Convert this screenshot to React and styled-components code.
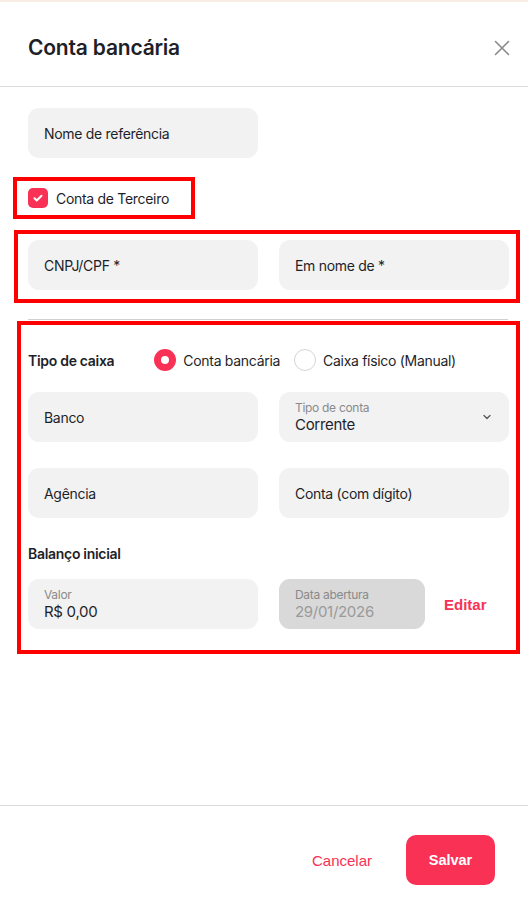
import React from 'react';
import styled, {createGlobalStyle} from 'styled-components';

const ACCENT = '#f93155';
const FIELD_BG = '#f2f2f2';
const TEXT = '#1e1f29';
const MARK = '#ff0000';

const GlobalStyle = createGlobalStyle`
    html, body {
        margin: 0;
        padding: 0;
        background: #fff;
    }
    body {
        font-family: Inter, "Noto Sans", sans-serif;
        color: ${TEXT};
    }
    * {
        box-sizing: border-box;
    }
`

const Modal = styled.div`
    width: 528px;
    height: 908px;
    display: flex;
    flex-direction: column;
    border-top: 2px solid #f8ece4;
    background: #fff;
`

const Header = styled.div`
    height: 85px;
    display: flex;
    align-items: center;
    justify-content: space-between;
    padding: 7px 17px 0 28px;
    border-bottom: 1px solid #dcdcdc;
`

const Title = styled.h1`
    margin: 0;
    font-size: 21px;
    font-weight: 600;
    letter-spacing: -0.2px;
    color: ${TEXT};
`

const CloseButton = styled.button`
    border: 0;
    background: none;
    padding: 0;
    width: 18px;
    height: 18px;
    display: flex;
    align-items: center;
    justify-content: center;
    cursor: pointer;
`

const Body = styled.div`
    flex: 1;
    padding: 21px 19px 0 28px;
    display: flex;
    flex-direction: column;
    font-size: 14px;
    letter-spacing: -0.3px;
`

/* the red marks drawn over the screenshot */
const Mark = styled.div`
    border: 4px solid ${MARK};
    margin: ${p => p.$margin};
    padding: ${p => p.$padding};
    align-self: ${p => p.$self || 'stretch'};
`

const Row = styled.div`
    display: grid;
    grid-template-columns: 230px 230px;
    column-gap: 21px;
    align-items: center;
`

const Field = styled.div`
    height: 50px;
    width: ${p => p.$width || 'auto'};
    border-radius: 11px;
    background: ${p => (p.$disabled ? '#d9d9d9' : FIELD_BG)};
    padding: 0 16px;
    display: flex;
    align-items: center;
    justify-content: space-between;
    color: ${TEXT};
`

const Stack = styled.div`
    display: flex;
    flex-direction: column;
    line-height: 1.15;
`

const Floating = styled.span`
    font-size: 12px;
    color: #8a8a8a;
    margin-bottom: 1px;
`

const Value = styled.span`
    font-size: 15px;
    color: ${p => (p.$muted ? '#9a9a9a' : TEXT)};
`

const CheckRow = styled.label`
    display: flex;
    align-items: center;
    gap: 8px;
`

const CheckBox = styled.span`
    width: 20px;
    height: 20px;
    border-radius: 5px;
    background: ${ACCENT};
    display: flex;
    align-items: center;
    justify-content: center;
`

const Divider = styled.hr`
    border: 0;
    border-top: 1px solid #d0d0d0;
    margin: 16px 1px 1px 0;
`

const SectionLabel = styled.span`
    font-weight: 600;
    color: ${TEXT};
`

const RadioRow = styled.div`
    display: flex;
    align-items: center;
`

const RadioOption = styled.label`
    display: flex;
    align-items: center;
    gap: 7px;
    margin-left: ${p => p.$offset || '0'};
`

const Radio = styled.span`
    width: 22px;
    height: 22px;
    border-radius: 50%;
    background: #fff;
    border: ${p => (p.$checked ? `7px solid ${ACCENT}` : '1px solid #d4d4d4')};
`

const Section = styled.div`
    display: flex;
    flex-direction: column;
    gap: ${p => p.$gap || '0'};
    margin-top: ${p => p.$top || '0'};
`

const DateRow = styled.div`
    display: flex;
    align-items: center;
`

const LinkButton = styled.button`
    border: 0;
    background: none;
    padding: 0;
    font-family: "Liberation Sans", Arial, sans-serif;
    font-size: 15px;
    font-weight: ${p => p.$weight || 400};
    margin-left: ${p => p.$offset || '0'};
    color: ${ACCENT};
    cursor: pointer;
`

const Footer = styled.div`
    height: 103px;
    border-top: 1px solid #dcdcdc;
    display: flex;
    align-items: flex-start;
    justify-content: flex-end;
    padding: 29px 33px 0 0;
    gap: 34px;
`

const FooterLink = styled(LinkButton)`
    height: 50px;
`

const PrimaryButton = styled.button`
    width: 89px;
    height: 50px;
    border: 0;
    border-radius: 10px;
    background: ${ACCENT};
    color: #fff;
    font-family: "Liberation Sans", Arial, sans-serif;
    font-size: 14.5px;
    font-weight: 700;
    cursor: pointer;
`

const Chevron = () => (
    <svg width="12" height="12" viewBox="0 0 24 24" fill="none" stroke="#555" strokeWidth="2.5" strokeLinecap="round" strokeLinejoin="round">
        <path d="M6 9l6 6 6-6" />
    </svg>
)

export default function App() {
    return (
        <>
            <GlobalStyle />
            <Modal>
                <Header>
                    <Title>Conta bancária</Title>
                    <CloseButton aria-label="Fechar">
                        <svg width="16" height="16" viewBox="0 0 16 16" stroke="#8a8a8a" strokeWidth="1.6" strokeLinecap="round">
                            <path d="M1.5 1.5l13 13M14.5 1.5l-13 13" />
                        </svg>
                    </CloseButton>
                </Header>

                <Body>
                    <Field $width="230px">Nome de referência</Field>

                    <Mark $self="flex-start" $margin="19px 0 0 -15px" $padding="7px 22px 7px 11px">
                        <CheckRow>
                            <CheckBox>
                                <svg width="12" height="12" viewBox="0 0 24 24" fill="none" stroke="#fff" strokeWidth="4" strokeLinecap="round" strokeLinejoin="round">
                                    <path d="M5 12.5l4.5 4.5L19 7.5" />
                                </svg>
                            </CheckBox>
                            Conta de Terceiro
                        </CheckRow>
                    </Mark>

                    <Mark $margin="11px -11px 0 -14px" $padding="6px 7px 9px 10px">
                        <Row>
                            <Field>CNPJ/CPF *</Field>
                            <Field>Em nome de *</Field>
                        </Row>
                    </Mark>

                    <Divider />

                    <Mark $margin="0 -11px 0 -11px" $padding="24px 7px 21px 7px">
                        <Section>
                            <RadioRow>
                                <SectionLabel>Tipo de caixa</SectionLabel>
                                <RadioOption $offset="40px">
                                    <Radio $checked />
                                    Conta bancária
                                </RadioOption>
                                <RadioOption $offset="14px">
                                    <Radio />
                                    Caixa físico (Manual)
                                </RadioOption>
                            </RadioRow>

                            <Section $gap="26px" $top="21px">
                                <Row>
                                    <Field>Banco</Field>
                                    <Field>
                                        <Stack>
                                            <Floating>Tipo de conta</Floating>
                                            <Value>Corrente</Value>
                                        </Stack>
                                        <Chevron />
                                    </Field>
                                </Row>
                                <Row>
                                    <Field>Agência</Field>
                                    <Field>Conta (com dígito)</Field>
                                </Row>
                            </Section>

                            <Section $gap="17px" $top="27px">
                                <SectionLabel>Balanço inicial</SectionLabel>
                                <Row>
                                    <Field>
                                        <Stack>
                                            <Floating>Valor</Floating>
                                            <Value>R$ 0,00</Value>
                                        </Stack>
                                    </Field>
                                    <DateRow>
                                        <Field $disabled $width="146px">
                                            <Stack>
                                                <Floating>Data abertura</Floating>
                                                <Value $muted>29/01/2026</Value>
                                            </Stack>
                                        </Field>
                                        <LinkButton $weight={700} $offset="19px">Editar</LinkButton>
                                    </DateRow>
                                </Row>
                            </Section>
                        </Section>
                    </Mark>
                </Body>

                <Footer>
                    <FooterLink>Cancelar</FooterLink>
                    <PrimaryButton>Salvar</PrimaryButton>
                </Footer>
            </Modal>
        </>
    );
}
